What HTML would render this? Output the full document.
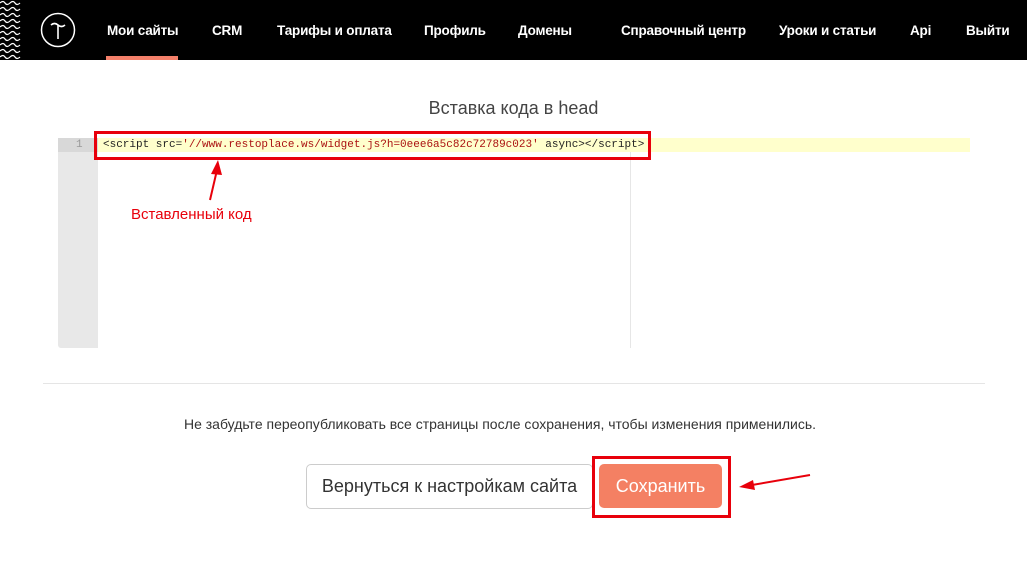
<!DOCTYPE html>
<html><head><meta charset="utf-8"><style>
body{margin:0;width:1027px;height:563px;background:#fff;font-family:"Liberation Sans",sans-serif;position:relative;overflow:hidden}
.hdr{position:absolute;left:0;top:0;width:1027px;height:60px;background:#000}
.nav{position:absolute;top:23px;color:#fff;font-weight:bold;font-size:13.5px;letter-spacing:-0.2px;white-space:nowrap}
.abs{position:absolute}
</style></head><body>
<div class="hdr">
<svg class="abs" style="left:0;top:0" width="22" height="60">
<g fill="none" stroke="#fff" stroke-width="1.2">
<path d="M0 3 q3 -3 5 0 t5 0 t5 0 t5 0"/><path d="M0 9 q3 -3 5 0 t5 0 t5 0 t5 0"/><path d="M0 15 q3 -3 5 0 t5 0 t5 0 t5 0"/><path d="M0 21 q3 -3 5 0 t5 0 t5 0 t5 0"/><path d="M0 27 q3 -3 5 0 t5 0 t5 0 t5 0"/><path d="M0 33 q3 -3 5 0 t5 0 t5 0 t5 0"/><path d="M0 39 q3 -3 5 0 t5 0 t5 0 t5 0"/><path d="M0 45 q3 -3 5 0 t5 0 t5 0 t5 0"/><path d="M0 51 q3 -3 5 0 t5 0 t5 0 t5 0"/><path d="M0 57 q3 -3 5 0 t5 0 t5 0 t5 0"/>
</g></svg>
<svg class="abs" style="top:12px;left:40px" width="36" height="36">
<circle cx="18" cy="18" r="16.5" fill="none" stroke="#fff" stroke-width="1.5"/>
<path d="M11 13 q3.5 -3 7 0 t7 0 M18 13 V27" fill="none" stroke="#fff" stroke-width="1.6"/>
</svg>
<div class="nav" style="left:107px">Мои сайты</div>
<div class="abs" style="left:106px;top:56px;width:72px;height:4px;background:#f4806a"></div>
<div class="nav" style="left:212px">CRM</div>
<div class="nav" style="left:277px">Тарифы и оплата</div>
<div class="nav" style="left:424px">Профиль</div>
<div class="nav" style="left:518px">Домены</div>
<div class="nav" style="left:621px">Справочный центр</div>
<div class="nav" style="left:779px">Уроки и статьи</div>
<div class="nav" style="left:910px">Api</div>
<div class="nav" style="left:966px">Выйти</div>
</div>
<div class="abs" style="left:0;width:1027px;top:98px;text-align:center;font-size:18px;color:#444">Вставка кода в head</div>
<div class="abs" style="left:58px;top:138px;width:40px;height:210px;background:#e8e8e8;border-radius:3px 0 0 3px"></div>
<div class="abs" style="left:98px;top:138px;width:872px;height:14px;background:#ffffcc"></div>
<div class="abs" style="left:58px;top:138px;width:40px;height:14px;background:#d8d8d8"></div>
<div class="abs" style="left:76px;top:139px;font:11px 'Liberation Mono',monospace;color:#999">1</div>
<div class="abs" style="left:630px;top:152px;width:1px;height:196px;background:#e6e6e6"></div>
<div class="abs" style="left:103px;top:139px;font:11px 'Liberation Mono',monospace;color:#222;white-space:nowrap">&lt;script src=<span style="color:#a11">'//www.restoplace.ws/widget.js?h=0eee6a5c82c72789c023'</span> async&gt;&lt;/script&gt;</div>
<div class="abs" style="left:94px;top:131px;width:551px;height:23px;border:3px solid #e8000b"></div>
<svg class="abs" style="left:0;top:0" width="1027" height="563">
<path d="M210 200 L217 170" stroke="#e8000b" stroke-width="2"/><path d="M218 160 L211 174 L222 175 Z" fill="#e8000b"/>
<path d="M810 475 L752 485" stroke="#e8000b" stroke-width="2"/><path d="M739 487 L753 480 L755 490 Z" fill="#e8000b"/>
</svg>
<div class="abs" style="left:131px;top:206px;font-size:15px;color:#e8000b">Вставленный код</div>
<div class="abs" style="left:43px;top:383px;width:942px;height:1px;background:#e5e5e5"></div>
<div class="abs" style="left:0;width:1000px;top:416px;text-align:center;font-size:14px;color:#333">Не забудьте переопубликовать все страницы после сохранения, чтобы изменения применились.</div>
<div class="abs" style="left:306px;top:464px;width:285px;height:43px;border:1px solid #ccc;border-radius:5px;font-size:18px;color:#333;line-height:43px;text-align:center">Вернуться к настройкам сайта</div>
<div class="abs" style="left:592px;top:456px;width:133px;height:56px;border:3px solid #e8000b"></div>
<div class="abs" style="left:599px;top:464px;width:123px;height:44px;background:#f48063;border-radius:5px;font-size:18px;color:#fff;line-height:44px;text-align:center">Сохранить</div>
</body></html>
